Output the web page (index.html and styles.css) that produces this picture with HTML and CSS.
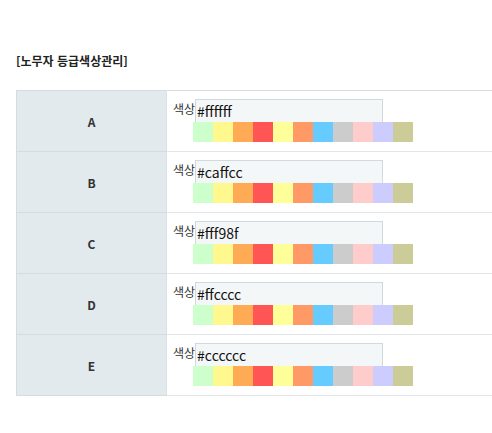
FILE: index.html
```html
<!DOCTYPE html>
<html lang="ko">
<head>
<meta charset="utf-8">
<link rel="stylesheet" href="styles.css">
</head>
<body>
<div class="page">
  <h2 class="title">[노무자 등급색상관리]</h2>
  <table class="grade">
    <tbody>
      <tr>
        <th>A</th>
        <td>
          <div class="field"><span class="lbl">색상</span><input class="color-input" type="text" value="#ffffff"></div>
          <div class="palette"><span class="sw c1"></span><span class="sw c2"></span><span class="sw c3"></span><span class="sw c4"></span><span class="sw c5"></span><span class="sw c6"></span><span class="sw c7"></span><span class="sw c8"></span><span class="sw c9"></span><span class="sw c10"></span><span class="sw c11"></span></div>
        </td>
      </tr>
      <tr>
        <th>B</th>
        <td>
          <div class="field"><span class="lbl">색상</span><input class="color-input" type="text" value="#caffcc"></div>
          <div class="palette"><span class="sw c1"></span><span class="sw c2"></span><span class="sw c3"></span><span class="sw c4"></span><span class="sw c5"></span><span class="sw c6"></span><span class="sw c7"></span><span class="sw c8"></span><span class="sw c9"></span><span class="sw c10"></span><span class="sw c11"></span></div>
        </td>
      </tr>
      <tr>
        <th>C</th>
        <td>
          <div class="field"><span class="lbl">색상</span><input class="color-input" type="text" value="#fff98f"></div>
          <div class="palette"><span class="sw c1"></span><span class="sw c2"></span><span class="sw c3"></span><span class="sw c4"></span><span class="sw c5"></span><span class="sw c6"></span><span class="sw c7"></span><span class="sw c8"></span><span class="sw c9"></span><span class="sw c10"></span><span class="sw c11"></span></div>
        </td>
      </tr>
      <tr>
        <th>D</th>
        <td>
          <div class="field"><span class="lbl">색상</span><input class="color-input" type="text" value="#ffcccc"></div>
          <div class="palette"><span class="sw c1"></span><span class="sw c2"></span><span class="sw c3"></span><span class="sw c4"></span><span class="sw c5"></span><span class="sw c6"></span><span class="sw c7"></span><span class="sw c8"></span><span class="sw c9"></span><span class="sw c10"></span><span class="sw c11"></span></div>
        </td>
      </tr>
      <tr>
        <th>E</th>
        <td>
          <div class="field"><span class="lbl">색상</span><input class="color-input" type="text" value="#cccccc"></div>
          <div class="palette"><span class="sw c1"></span><span class="sw c2"></span><span class="sw c3"></span><span class="sw c4"></span><span class="sw c5"></span><span class="sw c6"></span><span class="sw c7"></span><span class="sw c8"></span><span class="sw c9"></span><span class="sw c10"></span><span class="sw c11"></span></div>
        </td>
      </tr>
    </tbody>
  </table>
</div>
</body>
</html>
```

FILE: styles.css
```css
html, body {
  margin: 0;
  padding: 0;
  background: #fff;
}
body {
  font-family: "Noto Sans CJK KR", "Noto Sans", sans-serif;
  color: #333;
}
.page {
  padding: 52px 0 0 16px;
}
.title {
  margin: 0 0 21px 0;
  font-size: 12px;
  line-height: 17px;
  font-weight: bold;
  color: #222;
}
.grade {
  width: 100%;
  border-collapse: collapse;
  border-top: 1px solid #d3dde1;
  border-left: 1px solid #d3dde1;
}
.grade tr {
  height: 61px;
}
.grade th {
  width: 149px;
  background: #e3eaed;
  border-right: 1px solid #d9e2e5;
  border-bottom: 1px solid #d3dde1;
  font-size: 12px;
  font-weight: bold;
  color: #333;
  padding: 0;
  text-align: center;
  vertical-align: middle;
}
.grade td {
  border-bottom: 1px solid #e2e6e8;
  padding: 8px 0 8px 6px;
  vertical-align: top;
}
.field {
  display: flex;
  align-items: flex-start;
  height: 23px;
}
.lbl {
  font-size: 12px;
  line-height: 14px;
  padding-top: 3px;
  color: #333;
}
.color-input {
  box-sizing: border-box;
  width: 188px;
  height: 24px;
  margin: 0;
  padding: 0 1px;
  border: 1px solid #cfdade;
  background: #f4f7f8;
  font-family: "Noto Sans CJK KR", "Noto Sans", sans-serif;
  font-size: 14px;
  color: #111;
  outline: none;
}
.palette {
  display: flex;
  margin-left: 20px;
}
.sw {
  width: 20px;
  height: 20px;
  display: block;
}
.c1 { background: #ccffcc; }
.c2 { background: #fff88f; }
.c3 { background: #ffaa55; }
.c4 { background: #ff5555; }
.c5 { background: #ffff99; }
.c6 { background: #ff9966; }
.c7 { background: #66ccff; }
.c8 { background: #cccccc; }
.c9 { background: #ffcccc; }
.c10 { background: #ccccff; }
.c11 { background: #cccc99; }
```
